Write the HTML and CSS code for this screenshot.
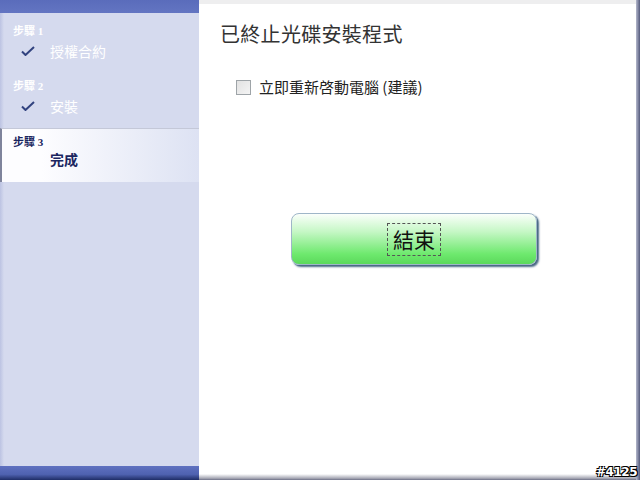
FILE: index.html
```html
<!DOCTYPE html>
<html lang="zh-TW">
<head>
  <meta charset="utf-8">
  <title>安裝程式</title>
  <link rel="stylesheet" href="styles.css">
</head>
<body>
<div class="window">
  <div class="sidebar">
    <div class="bar-top"></div>
    <div class="step done">
      <div class="step-label">步驟 1</div>
      <div class="step-name">
        <span class="check"><svg width="14" height="10" viewBox="0 0 14 10"><path d="M1 5.5 L4.5 9 L13 1" fill="none" stroke="#31427f" stroke-width="2"/></svg></span>授權合約
      </div>
    </div>
    <div class="step done">
      <div class="step-label">步驟 2</div>
      <div class="step-name">
        <span class="check"><svg width="14" height="10" viewBox="0 0 14 10"><path d="M1 5.5 L4.5 9 L13 1" fill="none" stroke="#31427f" stroke-width="2"/></svg></span>安裝
      </div>
    </div>
    <div class="step current">
      <div class="step-label">步驟 3</div>
      <div class="step-name"><span class="check"></span>完成</div>
    </div>
    <div class="filler"></div>
    <div class="bar-bottom"></div>
  </div>

  <div class="main">
    <div class="content">
      <h1 class="title">已終止光碟安裝程式</h1>
      <label class="restart"><span class="box"></span>立即重新啓動電腦 (建議)</label>
      <button class="finish"><span class="focus">結束</span></button>
    </div>
    <div class="shadow-bottom"></div>
  </div>
  <div class="edge-right"></div>

  <div class="stamp">#4125</div>
</div>
</body>
</html>
```

FILE: styles.css
```css
body {
    margin: 0;
    font-family: "Noto Sans CJK TC", "Noto Sans", sans-serif;
}

.window {
    position: relative;
    width: 640px;
    height: 480px;
    display: flex;
    overflow: hidden;
    background: #fff;
}

/* left step list */
.sidebar {
    width: 199px;
    display: flex;
    flex-direction: column;
    background: linear-gradient(to right, #bcc3e2 0, #d5daee 4px);
}

.bar-top {
    height: 13px;
    background: linear-gradient(#5a6cbb, #6375c2);
}

.step {
    height: 55px;
    box-sizing: border-box;
    padding: 10px 0 0 13px;
}

.step-label {
    font-family: "Liberation Serif", "Noto Sans CJK TC", serif;
    font-weight: bold;
    font-size: 11px;
    line-height: 16px;
    color: #fff;
}

.step-name {
    display: flex;
    align-items: center;
    font-size: 14px;
    line-height: 18px;
    color: #fff;
}

.done .step-name {
    margin-top: 3px;
}

.check {
    width: 37px;
    height: 18px;
    padding: 4px 0 0 8px;
    box-sizing: border-box;
}

.check svg {
    display: block;
}

.step.current {
    height: 54px;
    margin-top: 5px;
    padding-top: 5px;
    border-top: 1px solid #c4c8d8;
    border-left: 2px solid #7f849c;
    padding-left: 11px;
    background: linear-gradient(to right, #fdfdff 20%, #dde2f3 100%);
}

.step.current .step-label,
.step.current .step-name {
    color: #1a2560;
}

.step.current .step-name {
    font-weight: bold;
}

.filler {
    flex: 1;
}

.bar-bottom {
    height: 14px;
    background: linear-gradient(#5f71c0 0, #4f62b0 60%, #1f2d66 100%);
}

/* right pane */
.main {
    flex: 1;
    display: flex;
    flex-direction: column;
    border-top: 4px solid #eeeeef;
}

.content {
    flex: 1;
    padding: 16px 0 0 21px;
    display: flex;
    flex-direction: column;
    align-items: flex-start;
}

.title {
    margin: 0;
    font-size: 20px;
    line-height: 28px;
    font-weight: normal;
    color: #333;
    letter-spacing: 0.3px;
}

.restart {
    margin: 29px 0 0 16px;
    display: flex;
    align-items: center;
    font-size: 15px;
    line-height: 20px;
    color: #222;
}

.box {
    width: 13px;
    height: 13px;
    margin-right: 8px;
    border: 1px solid #9ea4a8;
    background: linear-gradient(135deg, #e2e2e2, #f4f4f4);
}

.finish {
    margin: 116px 0 0 71px;
    width: 246px;
    height: 52px;
    border: 1px solid #9fb6c8;
    border-radius: 8px;
    background: linear-gradient(#fbfffb 0, #c6f7c6 35%, #6ee96e 80%, #5bd95b 100%);
    box-shadow: 2px 2px 2px #4b6a86, 1px 1px 0 #6b8ba4;
    display: flex;
    justify-content: center;
    align-items: center;
    font-family: inherit;
    cursor: pointer;
}

.focus {
    border: 1px dashed #555;
    padding: 2px 5px;
    font-size: 21px;
    line-height: 27px;
    color: #111;
}

.shadow-bottom {
    height: 6px;
    background: linear-gradient(#fff, #a9aab6 70%, #6c6f86);
}

.edge-right {
    width: 4px;
    background: linear-gradient(to right, #b4b8cc, #545a7c);
}

.stamp {
    position: absolute;
    right: 3px;
    bottom: 1px;
    font-family: "DejaVu Sans", sans-serif;
    font-weight: bold;
    font-size: 12px;
    letter-spacing: -0.5px;
    color: #fff;
    text-shadow: -1px -1px 0 #000, 1px -1px 0 #000, -1px 1px 0 #000, 1px 1px 0 #000;
}
```
